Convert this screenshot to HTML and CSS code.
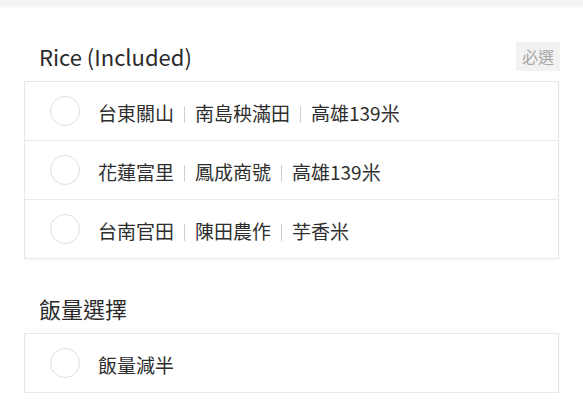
FILE: index.html
```html
<!DOCTYPE html>
<html lang="zh-Hant">

<head>
    <meta charset="UTF-8">
    <meta name="viewport" content="width=device-width, initial-scale=1.0">
    <title>選項</title>
    <link rel="stylesheet" href="styles.css">
</head>

<body>
    <div class="topbar"></div>

    <div class="section">
        <div class="section-head">
            <h2 class="title">Rice (Included)</h2>
            <span class="badge">必選</span>
        </div>
        <div class="card">
            <label class="option">
                <span class="radio"></span>
                <span class="text">台東關山<span class="sep"></span>南島秧滿田<span class="sep"></span>高雄139米</span>
            </label>
            <label class="option">
                <span class="radio"></span>
                <span class="text">花蓮富里<span class="sep"></span>鳳成商號<span class="sep"></span>高雄139米</span>
            </label>
            <label class="option">
                <span class="radio"></span>
                <span class="text">台南官田<span class="sep"></span>陳田農作<span class="sep"></span>芋香米</span>
            </label>
        </div>
    </div>

    <div class="section">
        <div class="section-head">
            <h2 class="title">飯量選擇</h2>
        </div>
        <div class="card">
            <label class="option">
                <span class="radio"></span>
                <span class="text">飯量減半</span>
            </label>
        </div>
    </div>
</body>

</html>
```

FILE: styles.css
```css
* {
    margin: 0;
    padding: 0;
    box-sizing: border-box;
}

body {
    font-family: "Noto Sans CJK TC", "Noto Sans", sans-serif;
    color: #333;
    background-color: #fff;
}

.topbar {
    height: 7px;
    background-color: #f4f4f4;
    box-shadow: 0 1px 2px rgba(0, 0, 0, 0.03);
}

.section {
    padding: 34px 24px 0 24px;
}

.section-head {
    display: flex;
    justify-content: space-between;
    align-items: center;
    height: 30px;
    margin-bottom: 10px;
    padding-left: 15px;
}

.title {
    font-size: 22px;
    font-weight: 400;
    line-height: 30px;
    color: #2a2a2a;
}

.badge {
    width: 44px;
    height: 29px;
    line-height: 29px;
    text-align: center;
    font-size: 16px;
    color: #a8a8a8;
    background-color: #f2f2f2;
    margin-right: -1px;
}

.card {
    border: 1px solid #e8e8e8;
    box-shadow: 0 1px 2px rgba(0, 0, 0, 0.05);
}

.option {
    display: flex;
    align-items: center;
    height: 58px;
    padding-left: 25px;
}

.option+.option {
    height: 59px;
    border-top: 1px solid #ebebeb;
}

.radio {
    width: 30px;
    height: 30px;
    border: 1px solid #dedede;
    border-radius: 50%;
    flex-shrink: 0;
    margin-right: 18px;
}

.text {
    font-size: 19px;
    line-height: 26px;
    color: #2e2e2e;
    padding-top: 4px;
}

.sep {
    display: inline-block;
    width: 1px;
    height: 17px;
    background-color: #cfcfcf;
    margin: 0 10px;
    vertical-align: -2px;
}
```
